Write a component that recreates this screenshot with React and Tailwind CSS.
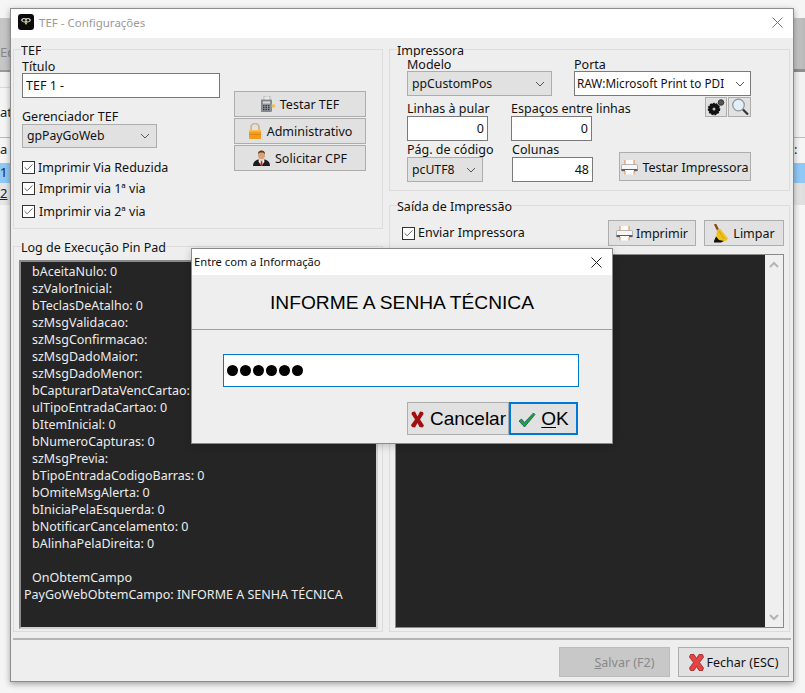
import React from "react";
import { Check } from "lucide-react";

const logLines = [
  "bAceitaNulo: 0",
  "szValorInicial:",
  "bTeclasDeAtalho: 0",
  "szMsgValidacao:",
  "szMsgConfirmacao:",
  "szMsgDadoMaior:",
  "szMsgDadoMenor:",
  "bCapturarDataVencCartao:",
  "ulTipoEntradaCartao: 0",
  "bItemInicial: 0",
  "bNumeroCapturas: 0",
  "szMsgPrevia:",
  "bTipoEntradaCodigoBarras: 0",
  "bOmiteMsgAlerta: 0",
  "bIniciaPelaEsquerda: 0",
  "bNotificarCancelamento: 0",
  "bAlinhaPelaDireita: 0",
  " ",
  "OnObtemCampo",
];

const Chevron = ({ className = "" }) => (
  <svg width="10" height="6" viewBox="0 0 10 6" fill="none" stroke="#555" strokeWidth="1" className={className}>
    <path d="M1 1l4 4 4-4" />
  </svg>
);

const ScrollArrow = ({ className = "" }) => (
  <svg width="10" height="7" viewBox="0 0 10 7" fill="none" stroke="#b4b4b4" strokeWidth="2" className={className}>
    <path d="M1 1l4 4 4-4" />
  </svg>
);

const CloseX = ({ color = "#555" }) => (
  <svg width="11" height="11" viewBox="0 0 11 11" stroke={color} strokeWidth="1" fill="none">
    <path d="M.5.5l10 10M10.5.5l-10 10" />
  </svg>
);

const Logo = () => (
  <svg width="16" height="16" viewBox="0 0 16 16">
    <rect width="16" height="16" rx="3" fill="#0b0b0b" />
    <path d="M3 6c1-2 3-2.500 5-1.500C10 3.500 12 4 13 6c-.5 2-2.500 2.500-5 2.500S3.500 8 3 6z" fill="#c9c9c0" />
    <circle cx="6" cy="6.300" r="1.200" fill="#111" />
    <circle cx="10" cy="6.300" r="1.200" fill="#111" />
    <path d="M6.500 8.500h3L8 11z" fill="#f0d838" />
  </svg>
);

const CalcIcon = () => (
  <svg width="14" height="16" viewBox="0 0 14 16">
    <rect x="3" y="0" width="6" height="5" fill="#e8e8e8" stroke="#999" strokeWidth=".6" />
    <rect x="0.500" y="4" width="10" height="11.500" fill="#8d9298" stroke="#666" strokeWidth=".6" />
    <rect x="2" y="5.500" width="7" height="2" fill="#d8dde0" />
    <path d="M2 9h1.400v1.200H2zM4.500 9h1.400v1.200H4.500zM7 9h1.400v1.200H7zM2 11h1.400v1.200H2zM4.500 11h1.400v1.200H4.500zM7 11h1.400v1.200H7zM2 13h1.400v1.200H2zM4.500 13h1.400v1.200H4.500zM7 13h1.400v1.200H7z" fill="#333" />
    <rect x="10.500" y="8.500" width="3.500" height="3" fill="#eec04a" />
  </svg>
);

const LockIcon = () => (
  <svg width="14" height="16" viewBox="0 0 14 16">
    <path d="M3 8V4.500a4 4 0 018 0V8" fill="none" stroke="#c8b48a" strokeWidth="1.600" />
    <rect x="1" y="7" width="12" height="9" rx="1" fill="#f49a1c" />
    <rect x="1" y="7" width="12" height="1.600" fill="#fbbd55" />
    <rect x="1" y="11" width="12" height=".7" fill="#d97e0c" />
  </svg>
);

const PersonIcon = () => (
  <svg width="17" height="16" viewBox="0 0 17 16">
    <path d="M0 16c0-4 2.500-6 5.500-6.500L8.500 11l3-1.500c3 .5 5.500 2.500 5.500 6.500z" fill="#1c1c1c" />
    <path d="M6 9.500l2.500 1.500 2.500-1.500 .5 2-3 4.500-3-4.500z" fill="#f4f4f4" />
    <path d="M7.800 11h1.400l.5 4-1.200 1-1.200-1z" fill="#c22a1c" />
    <ellipse cx="8.500" cy="5" rx="3.500" ry="4.300" fill="#d9a079" />
    <path d="M5 4.500C4.800 1.500 6.500.5 8.500.5s3.700 1 3.500 4c-.6-1.500-1.500-2-3.500-2s-3 .5-3.500 2z" fill="#5a3a22" />
  </svg>
);

const PrinterIcon = () => (
  <svg width="17" height="16" viewBox="0 0 17 16">
    <rect x="4" y="1" width="9" height="5" fill="#fbfbfb" />
    <path d="M4 1v5M13 1v5" stroke="#e8731c" strokeWidth=".8" />
    <rect x="0.500" y="5.500" width="16" height="6.500" rx="1" fill="#f6f6f6" stroke="#9a9a9a" strokeWidth=".7" />
    <rect x="0.500" y="10" width="16" height="2" fill="#5e5e5e" />
    <rect x="4" y="11" width="9" height="4.500" fill="#fff" />
    <path d="M4 12v3.500M13 12v3.500" stroke="#e8731c" strokeWidth=".8" />
  </svg>
);

const GearIcon = () => (
  <svg width="18" height="17" viewBox="0 0 18 17">
    <circle cx="7" cy="10" r="5.500" fill="#111" stroke="#111" strokeWidth="1.500" strokeDasharray="2 1" />
    <circle cx="7" cy="10" r="1.500" fill="#bbb" />
    <circle cx="14" cy="3.500" r="2.800" fill="#555" stroke="#222" strokeWidth=".8" />
  </svg>
);

const SearchIcon = () => (
  <svg width="18" height="18" viewBox="0 0 18 18">
    <circle cx="7.500" cy="7" r="5.800" fill="#e3eef6" stroke="#8a949c" strokeWidth="1.200" />
    <path d="M12 11.500l5 5" stroke="#333" strokeWidth="2.200" />
  </svg>
);

const BroomIcon = () => (
  <svg width="16" height="19" viewBox="0 0 16 19">
    <path d="M2 0l3 6" stroke="#8a4a14" strokeWidth="2.400" />
    <path d="M4 6l3-1.500 8 10-2 2.500-8 .5-2-3z" fill="#eec21e" />
    <path d="M6 7l5 8" stroke="#c89a10" strokeWidth=".8" />
    <path d="M1 17l2-4.500 3 3.500 5 1-3 1.500H1z" fill="#111" />
  </svg>
);

const RedX = () => (
  <svg width="15" height="17" viewBox="0 0 15 17">
    <path d="M2 1l3-.5 2.500 5 2.500-5 3 .5 .5 2L10 8.500l4 6-1.500 2-3-.5-2-4-2.500 4.500-3-.5L1 14l4-5.500L1.500 3z" fill="#a01010" />
  </svg>
);

const BigCross = () => (
  <svg width="15" height="17" viewBox="0 0 15 17">
    <path d="M1.500.5l3.500 0L7.500 4.500 10 .5h3.500l1 2.500L10.500 8.500l4 5.500-1 2.500H10L7.500 12.500 5 16.500H1.500l-1-2.500 4-5.500L.5 3z" fill="#e64444" stroke="#9c2020" strokeWidth=".8" />
  </svg>
);

const GreenCheck = () => (
  <svg width="18" height="16" viewBox="0 0 18 16">
    <path d="M1 9l2.500-2 3 3.500L15.500 1 17 2.500 6.500 15z" fill="#22a81e" stroke="#0a3d8a" strokeWidth=".7" />
  </svg>
);

const Button = ({ icon, children, className = "" }) => (
  <div className={`flex items-center justify-center gap-[5px] bg-[#e1e1e1] border border-[#adadad] text-[#111] ${className}`}>
    {icon}
    <span className="whitespace-nowrap pt-[3px]">{children}</span>
  </div>
);

const Field = ({ value, className = "" }) => (
  <input
    readOnly
    value={value}
    className={`block bg-white border border-[#7a7a7a] px-[3px] h-[25px] outline-none text-[#111] ${className}`}
  />
);

const Dropdown = ({ value, className = "" }) => (
  <div className={`flex items-center justify-between bg-[#e1e1e1] border border-[#adadad] pl-[4px] pr-[6px] text-[#111] text-[12.25px] ${className}`}>
    <span className="whitespace-nowrap overflow-hidden pt-[1px]">{value}</span>
    <Chevron className="shrink-0 ml-[2px]" />
  </div>
);

const CheckRow = ({ label, className = "", gap = "gap-[4px]" }) => (
  <div className={`flex items-center h-[13px] ${gap} ${className}`}>
    <span className="flex items-center justify-center w-[13px] h-[13px] border border-[#333] bg-white shrink-0">
      <Check size={11} strokeWidth={1.8} color="#444" />
    </span>
    <span className="whitespace-nowrap text-[#111] pt-[1px]">{label}</span>
  </div>
);

const Legend = ({ children, className = "" }) => (
  <div className={`-mt-[8px] ml-[7px] h-[16px] pt-[1px] leading-[16px] w-fit bg-[#eeeeee] text-[#111] whitespace-nowrap overflow-hidden ${className}`}>
    {children}
  </div>
);

const Label = ({ children, className = "" }) => (
  <div className={`h-[16px] pt-[1px] leading-[16px] text-[#111] whitespace-nowrap ${className}`}>{children}</div>
);

const LeftStrip = () => (
  <div className="w-[10px] shrink-0 overflow-hidden text-[13px] text-[#222] bg-[#f5f5f5]">
    <div className="h-[18px]" />
    <div className="h-[54px] bg-[#c6c6c6] border-b-2 border-[#9a9a9a] flex items-end pb-[8px] text-[#888] whitespace-nowrap">Ed</div>
    <div className="h-[16px] bg-[#f2f2f2] border-b border-[#d8d8d8]" />
    <div className="h-[50px] flex items-center whitespace-nowrap border-b border-[#bbb]">ati</div>
    <div className="h-[25px] flex items-center pb-[2px]">a</div>
    <div className="h-[20px] bg-[#90c8f6] flex items-center">1</div>
    <div className="h-[22px] bg-[#e6e6e6] flex items-center underline">2</div>
  </div>
);

const RightStrip = () => (
  <div className="flex-1 overflow-hidden text-[13px] text-[#222] bg-[#f5f5f5]">
    <div className="h-[18px]" />
    <div className="h-[54px] bg-gradient-to-r from-[#c8c8c8] to-[#b8b8b8] border-b-[3px] border-[#8e8e8e]" />
    <div className="h-[66px] bg-[#f2f2f2] border-b border-[#bbb]" />
    <div className="h-[25px] flex items-center leading-none pb-[2px]">:</div>
    <div className="h-[20px] bg-[#90c8f6]" />
    <div className="h-[22px] bg-gradient-to-r from-[#e8e8e8] to-[#dcdcdc]" />
  </div>
);

const TefGroup = () => (
  <div className="h-[180px] border border-[#dcdcdc]">
    <Legend>TEF</Legend>
    <div className="flex pl-[8px]">
      <div className="w-[198px]">
        <Label className="!h-[15px]">Título</Label>
        <Field value="TEF 1 -" className="w-full !border-[#777]" />
        <Label className="mt-[10px]">Gerenciador TEF</Label>
        <Dropdown value="gpPayGoWeb" className="w-[135px] h-[24px]" />
        <CheckRow label="Imprimir Via Reduzida" className="mt-[13px]" gap="gap-[3px]" />
        <CheckRow label="Imprimir via 1ª via" className="mt-[8px]" />
        <CheckRow label="Imprimir via 2ª via" className="mt-[10px]" />
      </div>
      <div className="ml-[14px] w-[132px] mt-[33px] flex flex-col gap-[1px]">
        <Button icon={<CalcIcon />} className="h-[26px]">Testar TEF</Button>
        <Button icon={<LockIcon />} className="h-[26px]">Administrativo</Button>
        <Button icon={<PersonIcon />} className="h-[26px]">Solicitar CPF</Button>
      </div>
    </div>
  </div>
);

const LogGroup = () => (
  <div className="mt-[17px] h-[386px] border border-[#dcdcdc]">
    <Legend>Log de Execução Pin Pad</Legend>
    <div className="ml-[5px] mt-[5px] w-[359px] h-[369px] bg-[#252525] border-2 border-t-[#8a8a8a] border-l-[#8a8a8a] border-r-[#d0d0d0] border-b-[#d0d0d0] pt-[1px] text-[#ececec] leading-[17px]">
      {logLines.map((line, i) => (
        <div key={i} className="pl-[11px] h-[17px] whitespace-pre">{line}</div>
      ))}
      <div className="pl-[3px] whitespace-nowrap">PayGoWebObtemCampo: INFORME A SENHA TÉCNICA</div>
    </div>
  </div>
);

const PrinterGroup = () => (
  <div className="h-[142px] border border-[#dcdcdc]">
    <Legend className="!h-[15px]">Impressora</Legend>
    <div className="pl-[17px]">
      <div className="flex">
        <div className="w-[145px]">
          <Label className="!h-[14px] !leading-[14px]">Modelo</Label>
          <Dropdown value="ppCustomPos" className="h-[25px]" />
        </div>
        <div className="ml-[22px] w-[177px]">
          <Label className="!h-[14px] !leading-[14px]">Porta</Label>
          <div className="flex items-center justify-between h-[25px] bg-white border border-[#7a7a7a] pl-[2px] pr-[5px] text-[#111] text-[11.75px]">
            <span className="whitespace-nowrap overflow-hidden">RAW:Microsoft Print to PDI</span>
            <Chevron className="shrink-0 ml-[4px]" />
          </div>
        </div>
      </div>
      <div className="flex mt-[1px]">
        <div className="w-[81px] pt-[3px]">
          <Label>Linhas à pular</Label>
          <Field value="0" className="w-full text-right" />
        </div>
        <div className="ml-[23px] w-[81px] pt-[3px]">
          <Label>Espaços entre linhas</Label>
          <Field value="0" className="w-full text-right" />
        </div>
        <div className="ml-[113px] flex gap-[1px] h-[20px]">
          <div className="w-[22px] h-[20px] bg-[#e1e1e1] border border-[#adadad] flex items-center justify-center"><GearIcon /></div>
          <div className="w-[23px] h-[20px] bg-[#e1e1e1] border border-[#adadad] flex items-center justify-center"><SearchIcon /></div>
        </div>
      </div>
      <div className="flex">
        <div className="w-[76px]">
          <Label>Pág. de código</Label>
          <Dropdown value="pcUTF8" className="h-[25px]" />
        </div>
        <div className="ml-[29px] w-[81px]">
          <Label>Colunas</Label>
          <Field value="48" className="w-full text-right" />
        </div>
        <Button icon={<PrinterIcon />} className="ml-[26px] mt-[11px] w-[132px] h-[29px] !gap-[4px]">Testar Impressora</Button>
      </div>
    </div>
  </div>
);

const OutputGroup = () => (
  <div className="mt-[14px] h-[427px] border border-[#dcdcdc]">
    <Legend>Saída de Impressão</Legend>
    <div className="flex items-center pl-[12px] pr-[5px] pt-[6px] h-[32px]">
      <CheckRow label="Enviar Impressora" gap="gap-[3px]" />
      <Button icon={<PrinterIcon />} className="ml-auto w-[88px] h-[26px] mr-[8px] !gap-[3px]">Imprimir</Button>
      <Button icon={<BroomIcon />} className="w-[80px] h-[26px] !gap-[4px]">Limpar</Button>
    </div>
    <div className="ml-[5px] mt-[8px] w-[389px] h-[374px] flex border border-[#8a8a8a] bg-[#efefef]">
      <div className="flex-1 bg-[#252525]" />
      <div className="w-[18px] flex flex-col items-center justify-between py-[6px]">
        <ScrollArrow className="rotate-180" />
        <ScrollArrow />
      </div>
    </div>
  </div>
);

const PasswordDialog = () => (
  <div className="absolute left-[180px] top-[239px] w-[422px] h-[196px] flex flex-col bg-[#eeeeee] border border-[#8a8a8a] shadow-[0_2px_8px_rgba(0,0,0,0.2)]">
    <div className="h-[26px] bg-white flex items-center justify-between pl-[2px] pr-[10px] text-[#111] text-[11.2px] shrink-0">
      <span>Entre com a Informação</span>
      <CloseX color="#222" />
    </div>
    <div
      className="h-[55px] pt-[2px] shrink-0 flex items-center justify-center border-b border-[#a0a0a0] text-[19.2px] text-black"
      style={{ fontFamily: '"Liberation Sans", Arial, sans-serif' }}
    >
      INFORME A SENHA TÉCNICA
    </div>
    <div className="mt-[24px] mx-[31px] h-[33px] bg-white border border-[#0078d7] flex items-center pl-[3px] gap-[2px] w-[356px]">
      {[0, 1, 2, 3, 4, 5].map((i) => (
        <span key={i} className="w-[11px] h-[11px] rounded-full bg-black" />
      ))}
    </div>
    <div
      className="mt-[15px] flex justify-end pr-[34px] text-[19px] text-black"
      style={{ fontFamily: '"Liberation Sans", Arial, sans-serif' }}
    >
      <div className="w-[102px] h-[33px] pt-[2px] flex items-center justify-center gap-[5px] bg-[#e1e1e1] border border-[#adadad]">
        <RedX />
        <span className="whitespace-nowrap">Cancelar</span>
      </div>
      <div className="w-[69px] h-[33px] pt-[2px] flex items-center justify-center gap-[5px] bg-[#e1e1e1] border-2 border-[#0078d7]">
        <GreenCheck />
        <span className="underline underline-offset-2">O</span>
        <span className="-ml-[5px]">K</span>
      </div>
    </div>
  </div>
);

const App = () => {
  return (
    <div
      className="w-[805px] h-[693px] overflow-hidden flex bg-[#f5f5f5] text-[12.5px]"
      style={{ fontFamily: '"Noto Sans", "Open Sans", sans-serif' }}
    >
      <LeftStrip />

      <div className="relative w-[784px] h-[674px] mt-[8px] shrink-0 flex flex-col bg-[#eeeeee] border border-[#8c8c8c] shadow-[0_2px_6px_rgba(0,0,0,0.35)]">
        {/* Title bar */}
        <div className="h-[29px] bg-white flex items-center justify-between pl-[7px] pr-[10px] pb-[3px] shrink-0">
          <div className="flex items-center gap-[5px]">
            <Logo />
            <span className="text-[#999] text-[11.5px] pt-[2px]">TEF - Configurações</span>
          </div>
          <CloseX color="#777" />
        </div>

        {/* Groups */}
        <div className="flex gap-[6px] pl-[2px] pt-[11px]">
          <div className="w-[370px]">
            <TefGroup />
            <LogGroup />
          </div>
          <div className="w-[401px]">
            <PrinterGroup />
            <OutputGroup />
          </div>
        </div>

        {/* Footer */}
        <div className="mt-[6px] mx-[2px] border-t-2 border-[#b4b4b4] flex justify-end gap-[8px] pt-[7px] pr-[2px]">
          <div className="w-[111px] h-[30px] flex items-center justify-center bg-[#c8c8c8] border border-[#bcbcbc] text-[#888] pl-[20px]">
            <span className="pt-[3px]"><span className="underline">S</span>alvar (F2)</span>
          </div>
          <Button icon={<BigCross />} className="w-[111px] h-[30px] !gap-[3px]">Fechar (ESC)</Button>
        </div>

        <PasswordDialog />
      </div>

      <RightStrip />
    </div>
  );
};

export default App;
